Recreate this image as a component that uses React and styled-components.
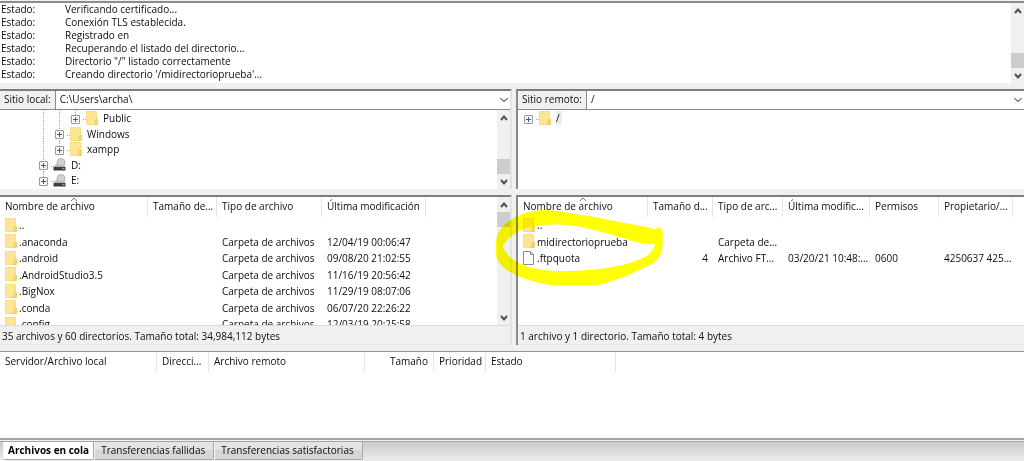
import React from "react";
import styled, { createGlobalStyle, css } from "styled-components";

const GlobalStyle = createGlobalStyle`
  *, *::before, *::after { box-sizing: border-box; }
  body {
    margin: 0;
    background: #f0f0f0;
    color: #0c0c0c;
    font-family: "Open Sans", "Noto Sans", sans-serif;
    font-size: 10px;
    line-height: 13px;
  }
  button, select { font: inherit; color: inherit; }
  ul { list-style: none; margin: 0; padding: 0; }
`;

const Shell = styled.main`
  display: flex;
  flex-direction: column;
  gap: 6px;
  height: 100vh;
  min-height: 440px;
  overflow: hidden;
`;

/* Scroll bar */

const Track = styled.div`
  display: flex;
  flex-direction: column;
  flex: none;
  width: 13px;
  background: #f0f0f0;
`;

const ScrollButton = styled.button`
  display: grid;
  place-items: center;
  flex: none;
  width: 13px;
  height: 15px;
  padding: 0;
  border: 0;
  background: transparent;
`;

const Thumb = styled.div`
  flex: none;
  height: 15px;
  background: #cdcdcd;
`;

const Space = styled.div`
  flex: 1;
`;

const Chevron = ({ up = false, size = 8, stroke = "#505050", width = 2 }) => (
  <svg width={size} height="6" viewBox="0 0 8 6" preserveAspectRatio="none" aria-hidden="true">
    <path d={up ? "M1 5L4 1.6L7 5" : "M1 1L4 4.4L7 1"} fill="none" stroke={stroke} strokeWidth={width} />
  </svg>
);

const ScrollBar = ({ atEnd = false }) => (
  <Track>
    <ScrollButton type="button" aria-label="Subir"><Chevron up /></ScrollButton>
    {atEnd && <Space />}
    <Thumb />
    {!atEnd && <Space />}
    <ScrollButton type="button" aria-label="Bajar"><Chevron /></ScrollButton>
  </Track>
);

/* Message log */

const Log = styled.section`
  display: flex;
  flex: none;
  border-top: 2px solid #8c8c8c;
  margin-top: 1px;
  background: #fff;
`;

const LogLines = styled.ul`
  flex: 1;
  min-width: 0;
  padding-bottom: 2px;
`;

const LogLine = styled.li`
  display: grid;
  grid-template-columns: 64px 1fr;
  padding-left: 1px;
  white-space: nowrap;
`;

/* Panes */

const Columns = styled.div`
  display: grid;
  grid-template-columns: 512fr 508fr;
  gap: 4px;
  flex: ${(p) => p.$grow} 1 0;
  min-height: 0;
`;

const Pane = styled.section`
  position: relative;
  display: flex;
  flex-direction: column;
  min-width: 0;
  min-height: 0;
  border-top: 2px solid #7d7d7d;
  ${(p) =>
    p.$remote
      ? css`border-left: 2px solid #8a8a8a;`
      : css`border-right: 2px solid #e3e3e3;`}
`;

const PaneBody = styled.div`
  display: flex;
  flex: 1;
  min-height: 0;
  overflow: hidden;
  background: #fff;
`;

const Content = styled.div`
  flex: 1;
  min-width: 0;
  overflow: hidden;
`;

const PathBar = styled.div`
  display: flex;
  flex: none;
  height: 19px;
  border-bottom: 1px solid #8a8a8a;
  background: #fff;
`;

const PathLabel = styled.label`
  flex: none;
  padding: 2px 4px 0;
  border-right: 1px solid #8a8a8a;
  background: #f0f0f0;
`;

const PathField = styled.div`
  display: flex;
  align-items: center;
  flex: 1;
  min-width: 0;
  padding-right: 1px;
`;

const PathSelect = styled.select`
  flex: 1;
  min-width: 0;
  height: 18px;
  padding: 0 4px 1px;
  border: 0;
  background: transparent;
  appearance: none;
  outline: none;
`;

const Path = ({ id, label, value }) => (
  <PathBar>
    <PathLabel htmlFor={id}>{label}</PathLabel>
    <PathField>
      <PathSelect id={id} defaultValue={value}>
        <option value={value}>{value}</option>
      </PathSelect>
      <Chevron size={10} stroke="#666" width={1} />
    </PathField>
  </PathBar>
);

/* Icons */

const Folder = () => (
  <svg width="12" height="14" viewBox="0 0 12 14" aria-hidden="true">
    <path d="M.5.5H10.5V13.5H.5Z" fill="#ffe694" stroke="#f8dc84" />
    <path d="M9.5 8.5H11.5V13.5H8.5Z" fill="#fbd768" stroke="#e9c355" strokeWidth=".7" />
  </svg>
);

const FileIcon = () => (
  <svg width="12" height="14" viewBox="0 0 12 14" aria-hidden="true">
    <path d="M.5.5H7.5L10.5 3.5V13.5H.5Z" fill="#fafafa" stroke="#8e8e8e" />
    <path d="M7.5.5V3.5H10.5" fill="none" stroke="#8e8e8e" />
  </svg>
);

const Drive = () => (
  <svg width="13" height="13" viewBox="0 0 13 13" aria-hidden="true">
    <path d="M3 6H11L12.5 9H.5Z" fill="#b9b9b9" />
    <circle cx="8" cy="4.5" r="4" fill="#d5d5d5" stroke="#999" strokeWidth=".7" />
    <circle cx="8" cy="4.5" r="1.3" fill="#fff" stroke="#999" strokeWidth=".6" />
    <path d="M.5 9H12.5V12.5H.5Z" fill="#3c3f3c" />
    <path d="M9 10.5H11.5" stroke="#42d84a" strokeWidth="1.2" />
  </svg>
);

/* Directory tree */

const Tree = styled.ul`
  padding-left: ${(p) => (p.$root ? 2 : 35)}px;
`;

const TreeRow = styled.li`
  display: flex;
  align-items: center;
  height: 16px;
  &:nth-child(even) { height: 15px; }
`;

const dots = "#a8a8a8 0 1px, transparent 1px 2px";

const Guide = styled.span`
  display: grid;
  place-items: center;
  flex: none;
  width: 16px;
  height: 100%;
  background: ${(p) =>
    p.$line ? `repeating-linear-gradient(to bottom, ${dots}) 8px 0 / 1px ${p.$line} no-repeat` : "none"};
`;

const Expander = styled.button`
  display: grid;
  place-items: center;
  width: 9px;
  height: 9px;
  margin-top: 2px;
  padding: 0;
  border: 1px solid #989898;
  border-radius: 1px;
  background: #f7f7f7;
`;

const TreeIcon = styled.span`
  display: flex;
  align-items: center;
  flex: none;
  width: 20px;
  padding-left: ${(p) => (p.$drive ? 2 : 3)}px;
  height: 100%;
  background: repeating-linear-gradient(to right, ${dots}) 0 9px / 3px 1px no-repeat;
`;

const TreeName = styled.span`
  padding: 1px 2px 0 0;
  background: ${(p) => (p.$selected ? "#ececec" : "none")};
`;

const TreeItem = ({ guides = [], line, name, drive, selected }) => (
  <TreeRow>
    {guides.map((g, i) => <Guide key={i} $line={g} />)}
    <Guide $line={line}>
      <Expander type="button" aria-label={`Expandir ${name}`}>
        <svg width="7" height="7" viewBox="0 0 7 7" aria-hidden="true">
          <path d="M1 3.5H6M3.5 1V6" stroke="#3b5aa5" />
        </svg>
      </Expander>
    </Guide>
    <TreeIcon $drive={drive}>{drive ? <Drive /> : <Folder />}</TreeIcon>
    <TreeName $selected={selected}>{name}</TreeName>
  </TreeRow>
);

/* Tables */

const Table = styled.table`
  table-layout: fixed;
  width: 0;
  border-collapse: separate;
  border-spacing: 0;
`;

const Head = styled.th`
  position: relative;
  height: 20px;
  padding: 0 5px 1px;
  border-right: 1px solid #e5e5e5;
  font-weight: 400;
  text-align: ${(p) => (p.$end ? "right" : "left")};
  white-space: nowrap;
`;

const SortMark = styled.span`
  position: absolute;
  top: 0;
  left: 50%;
  display: flex;
  height: 4px;
  margin-left: -4px;
`;

const Row = styled.tr`
  height: 17px;
  &:nth-child(even) { height: 16px; }
`;

const Cell = styled.td`
  padding: 0 5px;
  text-align: ${(p) => (p.$end ? "right" : "left")};
  white-space: nowrap;
`;

const FileName = styled.span`
  display: flex;
  align-items: center;
  gap: 2px;
  height: 16px;
  svg { margin-bottom: 2px; }
`;

const DataTable = ({ label, columns, rows = [] }) => (
  <Table aria-label={label}>
    <colgroup>
      {columns.map((c) => <col key={c.title} style={{ width: c.width }} />)}
    </colgroup>
    <thead>
      <tr>
        {columns.map((c) => (
          <Head key={c.title} scope="col" $end={c.end}>
            {c.title}
            {c.sorted && (
              <SortMark>
                <svg width="8" height="4" viewBox="0 0 8 4" aria-hidden="true">
                  <path d="M1 4L4 1L7 4" fill="none" stroke="#777" />
                </svg>
              </SortMark>
            )}
          </Head>
        ))}
      </tr>
    </thead>
    <tbody>
      {rows.map((r) => (
        <Row key={r.name}>
          <Cell>
            <FileName>{r.file ? <FileIcon /> : <Folder />}{r.name}</FileName>
          </Cell>
          {r.cells.map((text, i) => (
            <Cell key={i} $end={columns[i + 1].end}>{text}</Cell>
          ))}
        </Row>
      ))}
    </tbody>
  </Table>
);

const Status = styled.div`
  flex: none;
  height: 20px;
  padding: 4px 2px 0;
  border-top: 1px solid #dcdcdc;
  border-bottom: 1px solid #e6e6e6;
  white-space: nowrap;
`;

const Marker = styled.svg`
  position: absolute;
  left: -28px;
  top: -7px;
  width: 180px;
  height: 100px;
  pointer-events: none;
  mix-blend-mode: multiply;
`;

/* Transfer queue */

const Queue = styled.section`
  display: flex;
  flex-direction: column;
  flex: 110 1 0;
  min-height: 0;
`;

const QueueBody = styled.div`
  flex: 1;
  min-height: 0;
  border-top: 1px solid #94949a;
  border-bottom: 2px solid #a3a3a8;
  background: #fff;
`;

const Tabs = styled.div`
  display: flex;
  align-items: flex-start;
  flex: none;
  height: 20px;
  margin-top: 1px;
  padding-left: 3px;
  border-top: 1px solid #a5a5a5;
  background: linear-gradient(#cbcbcb, #ececec);
`;

const Tab = styled.button`
  height: 18px;
  padding: 0 8px 1px 6px;
  border: 1px solid #a9a9a9;
  border-top: 0;
  border-left-color: #f5f5f5;
  border-radius: 0 0 2px 2px;
  background: linear-gradient(#e4e4e4 50%, #d6d6d6 50%);
  white-space: nowrap;
  ${(p) =>
    p.$active &&
    css`
      padding: 0 4px 1px;
      background: #fff;
      color: #000;
      font-weight: 700;
    `}
`;

const log = [
  "Verificando certificado...",
  "Conexión TLS establecida.",
  "Registrado en",
  "Recuperando el listado del directorio...",
  'Directorio "/" listado correctamente',
  "Creando directorio '/midirectorioprueba'...",
];

const localColumns = [
  { title: "Nombre de archivo", width: 148, sorted: true },
  { title: "Tamaño de...", width: 69, end: true },
  { title: "Tipo de archivo", width: 105 },
  { title: "Última modificación", width: 104 },
];

const localRows = [
  { name: "..", cells: ["", "", ""] },
  ...[
    [".anaconda", "12/04/19 00:06:47"],
    [".android", "09/08/20 21:02:55"],
    [".AndroidStudio3.5", "11/16/19 20:56:42"],
    [".BigNox", "11/29/19 08:07:06"],
    [".conda", "06/07/20 22:26:22"],
    [".config", "12/03/19 20:25:58"],
  ].map(([name, date]) => ({ name, cells: ["", "Carpeta de archivos", date] })),
];

const remoteColumns = [
  { title: "Nombre de archivo", width: 130, sorted: true },
  { title: "Tamaño d...", width: 65, end: true },
  { title: "Tipo de arc...", width: 70 },
  { title: "Última modific...", width: 87 },
  { title: "Permisos", width: 69 },
  { title: "Propietario/...", width: 74 },
];

const remoteRows = [
  { name: "..", cells: ["", "", "", "", ""] },
  { name: "midirectorioprueba", cells: ["", "Carpeta de...", "", "", ""] },
  { name: ".ftpquota", file: true, cells: ["4", "Archivo FT...", "03/20/21 10:48:...", "0600", "4250637 425..."] },
];

const queueColumns = [
  { title: "Servidor/Archivo local", width: 157 },
  { title: "Direcci...", width: 52 },
  { title: "Archivo remoto", width: 156 },
  { title: "Tamaño", width: 69, end: true },
  { title: "Prioridad", width: 52 },
  { title: "Estado", width: 130 },
];

export default function App() {
  return (
    <>
      <GlobalStyle />
      <Shell>
        <Log aria-label="Registro de mensajes">
          <LogLines>
            {log.map((text) => (
              <LogLine key={text}><span>Estado:</span><span>{text}</span></LogLine>
            ))}
          </LogLines>
          <ScrollBar atEnd />
        </Log>

        <Columns $grow={100}>
          <Pane>
            <Path id="local" label="Sitio local:" value="C:\Users\archa\" />
            <PaneBody>
              <Content>
                <Tree>
                  <TreeItem guides={["100%", "100%"]} line="50%" name="Public" />
                  <TreeItem guides={["100%"]} line="100%" name="Windows" />
                  <TreeItem guides={["100%"]} line="50%" name="xampp" />
                  <TreeItem line="100%" name="D:" drive />
                  <TreeItem line="50%" name="E:" drive />
                </Tree>
              </Content>
              <ScrollBar atEnd />
            </PaneBody>
          </Pane>
          <Pane $remote>
            <Path id="remote" label="Sitio remoto:" value="/" />
            <PaneBody>
              <Content>
                <Tree $root>
                  <TreeItem name="/" selected />
                </Tree>
              </Content>
            </PaneBody>
          </Pane>
        </Columns>

        <Columns $grow={150}>
          <Pane>
            <PaneBody>
              <Content>
                <DataTable label="Archivos locales" columns={localColumns} rows={localRows} />
              </Content>
              <ScrollBar />
            </PaneBody>
            <Status>35 archivos y 60 directorios. Tamaño total: 34,984,112 bytes</Status>
          </Pane>
          <Pane $remote>
            <PaneBody>
              <Content>
                <DataTable label="Archivos remotos" columns={remoteColumns} rows={remoteRows} />
              </Content>
            </PaneBody>
            <Status>1 archivo y 1 directorio. Tamaño total: 4 bytes</Status>
            <Marker viewBox="0 0 540 300" aria-hidden="true">
              <path
                fill="#ff0"
                fillRule="evenodd"
                d="M18 165C17 138 28 118 48 100C72 80 112 62 160 60C205 60 250 72 300 79L400 98L470 111L498 119L500 112L514 114L518 130V165C516 190 508 206 494 216C478 228 455 236 430 248C395 264 350 280 318 286H195C160 284 112 270 75 254C48 240 20 224 18 190ZM38 172C48 188 58 202 78 215C105 230 150 242 200 243C260 244 320 242 380 229C430 218 466 204 480 190C490 178 494 172 495 163C470 163 450 158 425 152L390 142L340 126C300 117 260 105 220 104C170 102 120 108 92 120C66 134 48 150 38 172Z"
              />
            </Marker>
          </Pane>
        </Columns>

        <Queue>
          <QueueBody>
            <DataTable label="Cola de transferencias" columns={queueColumns} />
          </QueueBody>
          <Tabs role="tablist">
            <Tab type="button" role="tab" aria-selected="true" $active>Archivos en cola</Tab>
            <Tab type="button" role="tab" aria-selected="false">Transferencias fallidas</Tab>
            <Tab type="button" role="tab" aria-selected="false">Transferencias satisfactorias</Tab>
          </Tabs>
        </Queue>
      </Shell>
    </>
  );
}
